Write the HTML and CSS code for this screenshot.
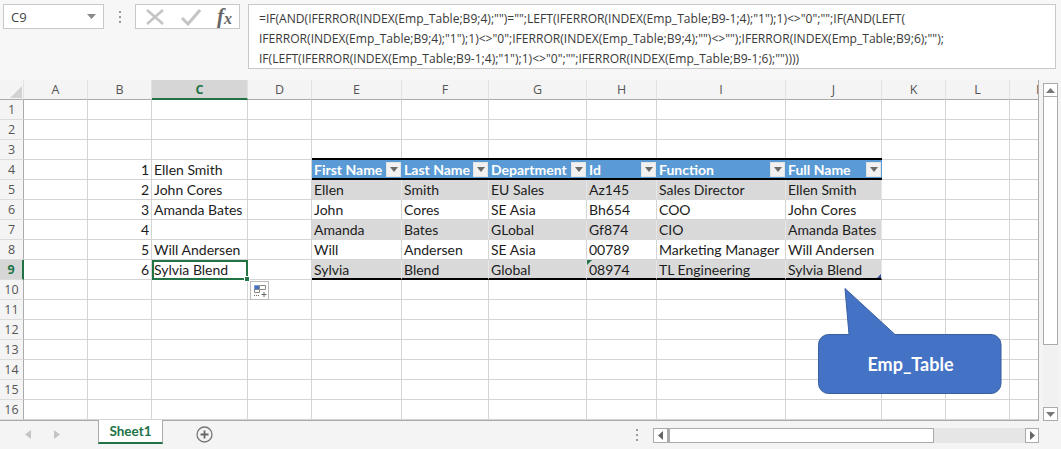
FILE: index.html
```html
<!DOCTYPE html>
<html lang="en">
<head>
<meta charset="utf-8">
<title>Emp_Table</title>
<link rel="stylesheet" href="styles.css">
</head>
<body>
<div class="app">
  <header class="formula-bar">
    <div class="name-box"><span>C9</span><svg class="caret" width="9" height="5" viewBox="0 0 9 5"><path d="M0 0h9L4.500 5z" fill="#8a8a8a"/></svg></div>
    <div class="grip"><i></i><i></i><i></i></div>
    <div class="fx-box">
      <svg width="20" height="18" viewBox="0 0 20 18"><path d="M2 2l16 14M18 2L2 16" stroke="#c4c4c4" stroke-width="2.600" fill="none"/></svg>
      <svg width="20" height="18" viewBox="0 0 20 18"><path d="M1 10l6 6L19 2" stroke="#c4c4c4" stroke-width="3" fill="none"/></svg>
      <span class="fx">f<sub>x</sub></span>
    </div>
    <div class="formula">=IF(AND(IFERROR(INDEX(Emp_Table;B9;4);"")="";LEFT(IFERROR(INDEX(Emp_Table;B9-1;4);"1");1)&lt;&gt;"0";"";IF(AND(LEFT(<br>IFERROR(INDEX(Emp_Table;B9;4);"1");1)&lt;&gt;"0";IFERROR(INDEX(Emp_Table;B9;4);"")&lt;&gt;"");IFERROR(INDEX(Emp_Table;B9;6);"");<br>IF(LEFT(IFERROR(INDEX(Emp_Table;B9-1;4);"1");1)&lt;&gt;"0";"";IFERROR(INDEX(Emp_Table;B9-1;6);""))))</div>
  </header>

  <main class="sheet-area">
    <div class="grid-wrap">
      <table class="grid">
        <colgroup>
          <col class="c-row"><col class="c64"><col class="c64"><col class="c96"><col class="c64"><col class="c90"><col class="c87"><col class="c98"><col class="c70"><col class="c129"><col class="c96"><col class="c64"><col class="c64"><col class="c64">
        </colgroup>
        <thead>
          <tr><th class="corner"><svg width="12" height="12" viewBox="0 0 12 12"><path d="M12 0v12H0z" fill="#d2d2d2"/></svg></th><th>A</th><th>B</th><th class="sel-col">C</th><th>D</th><th>E</th><th>F</th><th>G</th><th>H</th><th>I</th><th>J</th><th>K</th><th>L</th><th>M</th></tr>
        </thead>
        <tbody>
          <tr><th>1</th><td></td><td></td><td></td><td></td><td></td><td></td><td></td><td></td><td></td><td></td><td></td><td></td><td></td></tr>
          <tr><th>2</th><td></td><td></td><td></td><td></td><td></td><td></td><td></td><td></td><td></td><td></td><td></td><td></td><td></td></tr>
          <tr><th>3</th><td></td><td></td><td></td><td></td><td></td><td></td><td></td><td></td><td></td><td></td><td></td><td></td><td></td></tr>
          <tr class="t-head"><th>4</th><td></td><td class="num">1</td><td>Ellen Smith</td><td></td>
            <td class="tc"><div class="hd">First Name<b class="flt"></b></div></td>
            <td class="tc"><div class="hd">Last Name<b class="flt"></b></div></td>
            <td class="tc"><div class="hd">Department<b class="flt"></b></div></td>
            <td class="tc"><div class="hd">Id<b class="flt"></b></div></td>
            <td class="tc"><div class="hd">Function<b class="flt"></b></div></td>
            <td class="tc"><div class="hd">Full Name<b class="flt"></b></div></td>
            <td></td><td></td><td></td></tr>
          <tr class="band"><th>5</th><td></td><td class="num">2</td><td>John Cores</td><td></td><td class="tc">Ellen</td><td class="tc">Smith</td><td class="tc">EU Sales</td><td class="tc">Az145</td><td class="tc">Sales Director</td><td class="tc">Ellen Smith</td><td></td><td></td><td></td></tr>
          <tr><th>6</th><td></td><td class="num">3</td><td>Amanda Bates</td><td></td><td class="tc">John</td><td class="tc">Cores</td><td class="tc">SE Asia</td><td class="tc">Bh654</td><td class="tc">COO</td><td class="tc">John Cores</td><td></td><td></td><td></td></tr>
          <tr class="band"><th>7</th><td></td><td class="num">4</td><td></td><td></td><td class="tc">Amanda</td><td class="tc">Bates</td><td class="tc">GLobal</td><td class="tc">Gf874</td><td class="tc">CIO</td><td class="tc">Amanda Bates</td><td></td><td></td><td></td></tr>
          <tr><th>8</th><td></td><td class="num">5</td><td>Will Andersen</td><td></td><td class="tc">Will</td><td class="tc">Andersen</td><td class="tc">SE Asia</td><td class="tc">00789</td><td class="tc">Marketing Manager</td><td class="tc">Will Andersen</td><td></td><td></td><td></td></tr>
          <tr class="band t-last"><th class="sel-row">9</th><td></td><td class="num">6</td>
            <td class="active">Sylvia Blend<span class="handle"></span>
              <span class="paste-opts"><svg width="14" height="14" viewBox="0 0 14 14"><path d="M1.500 1.500h5v4h-5z" fill="#4472c4" stroke="#7f9bd1"/><path d="M6.500 1.500h6v4h-6zM1.500 5.500h5v3h-5z" fill="#fff" stroke="#8a8a8a"/><path d="M1 11.500h6" stroke="#666" stroke-dasharray="1 1"/><path d="M11 8v5M8.500 10.500h5" stroke="#666"/></svg></span>
            </td>
            <td></td><td class="tc">Sylvia</td><td class="tc">Blend</td><td class="tc">Global</td><td class="tc flagged">08974</td><td class="tc">TL Engineering</td><td class="tc resize">Sylvia Blend</td><td></td><td></td><td></td></tr>
          <tr><th>10</th><td></td><td></td><td></td><td></td><td></td><td></td><td></td><td></td><td></td><td></td><td></td><td></td><td></td></tr>
          <tr><th>11</th><td></td><td></td><td></td><td></td><td></td><td></td><td></td><td></td><td></td><td></td><td></td><td></td><td></td></tr>
          <tr><th>12</th><td></td><td></td><td></td><td></td><td></td><td></td><td></td><td></td><td></td><td></td><td></td><td></td><td></td></tr>
          <tr><th>13</th><td></td><td></td><td></td><td></td><td></td><td></td><td></td><td></td><td></td><td></td><td></td><td></td><td></td></tr>
          <tr><th>14</th><td></td><td></td><td></td><td></td><td></td><td></td><td></td><td></td><td></td><td></td><td></td><td></td><td></td></tr>
          <tr><th>15</th><td></td><td></td><td></td><td></td><td></td><td></td><td></td><td></td><td></td><td></td><td></td><td></td><td></td></tr>
          <tr><th>16</th><td></td><td></td><td></td><td></td><td></td><td></td><td></td><td></td><td></td><td></td><td></td><td></td><td></td></tr>
        </tbody>
      </table>
      <div class="callout">
        <svg class="callout-shape" width="189" height="110" viewBox="0 0 189 110"><path d="M12.500 47.500H33L29 1.500 79 47.500H175a10 10 0 0 1 10 10v39a10 10 0 0 1-10 10H12.500a10 10 0 0 1-10-10v-39a10 10 0 0 1 10-10z" fill="#4472c4" stroke="#3a5f9f"/></svg>
        <span class="callout-text">Emp_Table</span>
      </div>
    </div>
    <aside class="v-scroll">
      <div class="sb-btn"><svg width="9" height="5" viewBox="0 0 9 5"><path d="M0 5h9L4.500 0z" fill="#777"/></svg></div>
      <div class="v-thumb"></div>
      <div class="v-track"></div>
      <div class="sb-btn"><svg width="9" height="5" viewBox="0 0 9 5"><path d="M0 0h9L4.500 5z" fill="#777"/></svg></div>
    </aside>
  </main>

  <footer class="tabs">
    <div class="nav-arrows">
      <svg width="6" height="9" viewBox="0 0 6 9"><path d="M6 0v9L0 4.500z" fill="#c4c4c4"/></svg>
      <svg width="6" height="9" viewBox="0 0 6 9"><path d="M0 0v9l6-4.500z" fill="#c4c4c4"/></svg>
    </div>
    <div class="tab">Sheet1</div>
    <svg class="add" width="17" height="17" viewBox="0 0 17 17"><circle cx="8.500" cy="8.500" r="7.500" fill="none" stroke="#777" stroke-width="1.300"/><path d="M8.500 4.500v8M4.500 8.500h8" stroke="#666" stroke-width="1.800"/></svg>
    <div class="grip tab-grip"><i></i><i></i><i></i></div>
    <div class="h-scroll">
      <div class="sb-btn h"><svg width="5" height="9" viewBox="0 0 5 9"><path d="M5 0v9L0 4.500z" fill="#666"/></svg></div>
      <div class="h-thumb"></div>
      <div class="h-track"></div>
      <div class="sb-btn h end"><svg width="5" height="9" viewBox="0 0 5 9"><path d="M0 0v9l5-4.500z" fill="#666"/></svg></div>
    </div>
  </footer>
</div>
</body>
</html>
```

FILE: styles.css
```css
* { box-sizing: border-box; }
html, body { margin: 0; padding: 0; }
body { width: 1061px; height: 449px; overflow: hidden; background: #f4f4f4; font-family: "Open Sans", "Liberation Sans", sans-serif; }
.app { display: flex; flex-direction: column; width: 1061px; height: 449px; }

/* formula bar */
.formula-bar { flex: 0 0 80px; display: flex; align-items: flex-start; padding: 4px 5px 0 3px; background: #f7f7f7; }
.name-box { flex: 0 0 101px; height: 25px; display: flex; align-items: center; justify-content: space-between; padding: 0 7px 0 7px; background: #fff; border: 1px solid #c8c8c8; font-size: 13px; color: #444; }
.grip { display: flex; flex-direction: column; gap: 3px; }
.grip i { display: block; width: 2px; height: 2px; background: #9a9a9a; }
.formula-bar > .grip { flex: 0 0 31px; padding: 7px 0 0 15px; }
.fx-box { flex: 0 0 105px; height: 25px; display: flex; align-items: center; gap: 16px; padding-left: 9px; background: #fff; border: 1px solid #c8c8c8; }
.fx { margin-left: 0; font-family: "Liberation Serif", serif; font-style: italic; font-weight: bold; font-size: 21px; line-height: 20px; color: #666; }
.fx sub { font-size: 16px; vertical-align: baseline; position: relative; top: 1px; }
.formula { flex: 0 0 808px; height: 65px; margin-left: 8px; padding: 4px 0 0 10px; background: #fff; border: 1px solid #c8c8c8; font-size: 12.080px; line-height: 20px; white-space: nowrap; color: #3a3a3a; overflow: hidden; }

/* sheet */
.sheet-area { flex: 0 0 341px; display: flex; background: #f4f4f4; }
.grid-wrap { position: relative; flex: 0 0 1039px; height: 341px; overflow: hidden; background: #fff; border-right: 1px solid #aaa; border-bottom: 1px solid #aaa; }
.grid { border-collapse: separate; border-spacing: 0; table-layout: fixed; width: 1074px; font-family: Lato, "Liberation Sans", sans-serif; font-size: 14px; color: #1c1c1c; }
.c-row { width: 24px; } .c64 { width: 64px; } .c96 { width: 96px; } .c90 { width: 90px; } .c87 { width: 87px; } .c98 { width: 98px; } .c70 { width: 70px; } .c129 { width: 129px; }
.grid td, .grid th { height: 20px; padding: 0; line-height: 19px; border-right: 1px solid #d4d4d4; border-bottom: 1px solid #d4d4d4; white-space: nowrap; overflow: hidden; }
.grid td { padding-left: 2px; }
.grid th { padding-top: 1px; line-height: 18px; font-family: "Open Sans", sans-serif; font-weight: 400; font-size: 12.500px; color: #555; background: #fff; text-align: center; }
.grid thead th { background: #f4f4f4; border-right-color: #e2e2e2; border-bottom-color: #ababab; }
.grid tbody th { background: #f4f4f4; border-right-color: #ababab; border-bottom-color: #dcdcdc; padding-left: 0; text-align: center; }
.grid thead .corner { text-align: right; padding: 4px 1px 0 0; line-height: 0; }
.grid thead .sel-col { background: #d6d6d6; color: #217346; font-weight: 700; line-height: 17px; border-bottom: 2px solid #217346; }
.grid tbody .sel-row { background: #d6d6d6; color: #217346; font-weight: 700; border-right: 2px solid #217346; }
.grid .num { text-align: right; padding: 0 2px 0 0; }

/* table */
.grid .tc { padding-left: 2px; }
.t-head .tc { padding: 0 1px 0 2px; background: #5b9bd5; color: #fff; font-weight: 700; border-right: 0; border-bottom: 2px solid #000; box-shadow: 0 -2px 0 #000; }
.hd { display: flex; align-items: flex-start; justify-content: space-between; height: 18px; line-height: 20px; }
.flt { position: relative; flex: 0 0 15px; align-self: center; height: 15px; background: #f1f1f1; border: 1px solid #e4e4e4; }
.flt::after { content: ""; position: absolute; left: 3px; top: 4px; border: 4px solid transparent; border-top: 5px solid #6b6b6b; border-bottom: 0; }
.band .tc { background: #d9d9d9; border-right-color: #e6e6e6; border-bottom-color: #d9d9d9; }
.t-last .tc { padding-top: 1px; line-height: 17px; border-bottom: 2px solid #000; }
.grid .active { position: relative; overflow: visible; outline: 2px solid #217346; outline-offset: -2px; }
.handle { position: absolute; right: -3px; bottom: -3px; width: 6px; height: 6px; background: #217346; border: 1px solid #fff; z-index: 3; }
.paste-opts { position: absolute; left: 98px; top: 21px; width: 19px; height: 19px; display: flex; align-items: center; justify-content: center; background: #fff; border: 1px solid #bbb; z-index: 3; }
.flagged { position: relative; }
.flagged::before { content: ""; position: absolute; left: 0; top: 0; border-top: 5px solid #217346; border-right: 5px solid transparent; }
.resize { position: relative; }
.resize::after { content: ""; position: absolute; right: 0; bottom: 0; border-bottom: 4px solid #3a4f9c; border-left: 4px solid transparent; }

/* callout */
.callout { position: absolute; left: 816px; top: 207px; width: 189px; height: 110px; }
.callout-shape { display: block; }
.callout-text { position: absolute; left: 0; right: 0; top: 58px; text-align: center; font-family: Lato, "Liberation Sans", sans-serif; font-weight: 700; font-size: 18px; line-height: 38px; color: #fff; }

/* scrollbars */
.v-scroll { flex: 0 0 15px; margin: 3px 0 0 4px; height: 338px; display: flex; flex-direction: column; background: #f1f1f1; }
.sb-btn { flex: 0 0 14px; display: flex; align-items: center; justify-content: center; background: #fff; border: 1px solid #ababab; }
.v-thumb { flex: 0 0 248px; background: #fff; border: 1px solid #ababab; border-top: 0; }
.v-track { flex: 1; }

/* tabs */
.tabs { flex: 0 0 28px; position: relative; display: flex; align-items: flex-start; background: #f4f4f4; }
.nav-arrows { flex: 0 0 98px; display: flex; gap: 23px; padding: 9px 0 0 25px; }
.tab { flex: 0 0 65px; height: 24px; margin-top: -1px; text-align: center; background: #fff; border: 1px solid #aaa; border-top: 0; border-bottom: 2px solid #217346; font-family: Lato, "Liberation Sans", sans-serif; font-weight: 700; font-size: 13.500px; line-height: 23px; color: #217346; }
.add { margin: 5px 0 0 33px; flex: 0 0 17px; }
.tab-grip { margin: 8px 0 0 423px; flex: 0 0 2px; }
.h-scroll { margin: 7px 0 0 15px; width: 386px; height: 15px; display: flex; background: #e6e6e6; }
.sb-btn.h { flex: 0 0 15px; }
.sb-btn.end { flex: 0 0 14px; }
.h-thumb { flex: 0 0 266px; background: #fff; border: 1px solid #ababab; border-left-width: 2px; }
.h-track { flex: 1; }
```
